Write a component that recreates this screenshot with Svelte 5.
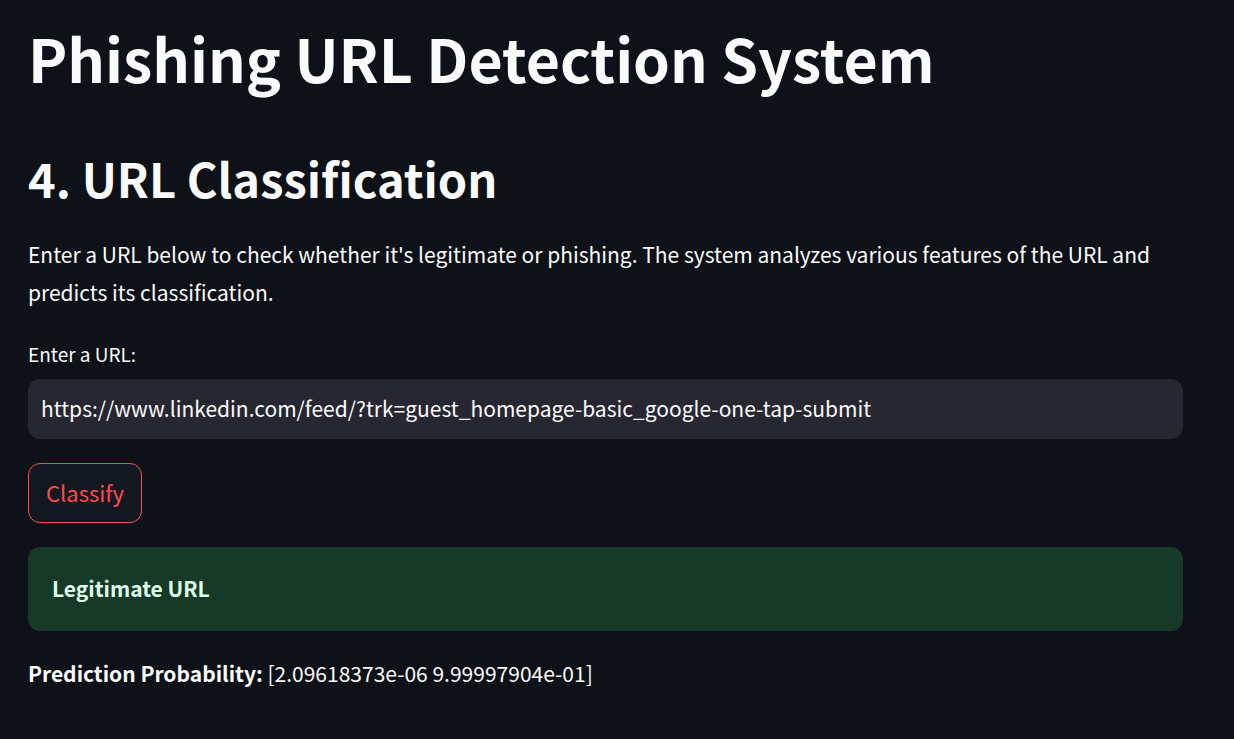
<script>
  let url = $state('https://www.linkedin.com/feed/?trk=guest_homepage-basic_google-one-tap-submit');
</script>

<main>
  <h1>Phishing URL Detection System</h1>
  <h2>4. URL Classification</h2>
  <p class="intro">Enter a URL below to check whether it's legitimate or phishing. The system analyzes various features of the URL and predicts its classification.</p>
  <div class="field">
    <label for="url">Enter a URL:</label>
    <input id="url" type="text" bind:value={url} />
  </div>
  <button type="button">Classify</button>
  <div class="result" role="status"><strong>Legitimate URL</strong></div>
  <p class="probability"><strong>Prediction Probability:</strong> [2.09618373e-06 9.99997904e-01]</p>
</main>

<style>
  :global(body) {
    background: #0e1117;
  }
  main {
    box-sizing: border-box;
    min-height: 100vh;
    padding: 20px 51px 24px 28px;
    color: #fafafa;
    font: 400 21px/38px "Noto Sans CJK SC", sans-serif;
  }
  h1 {
    margin: 0;
    font-size: 59px;
    line-height: 76px;
    font-weight: 700;
  }
  h2 {
    margin: 50px 0 0;
    font-size: 47px;
    line-height: 64px;
    font-weight: 700;
  }
  p {
    margin: 0;
  }
  .intro {
    margin-top: 25px;
  }
  .field {
    display: flex;
    flex-direction: column;
    gap: 10px;
    margin-top: 28px;
  }
  label {
    font-size: 19px;
    line-height: 30px;
  }
  input {
    box-sizing: border-box;
    width: 100%;
    height: 60px;
    padding: 0 13px 2px;
    border: 0;
    border-radius: 12px;
    outline: 0;
    background: #262730;
    color: inherit;
    font: inherit;
  }
  button {
    display: block;
    height: 60px;
    margin-top: 24px;
    padding: 0 17px 2px;
    border: 1px solid #ff4b4b;
    border-radius: 12px;
    background: #131720;
    color: #ff4b4b;
    font: inherit;
    font-size: 22px;
    cursor: pointer;
  }
  .result {
    margin-top: 24px;
    padding: 22px 24px 24px;
    border-radius: 12px;
    background: #173928;
    color: #dffde9;
  }
  .probability {
    margin-top: 23px;
  }
</style>
